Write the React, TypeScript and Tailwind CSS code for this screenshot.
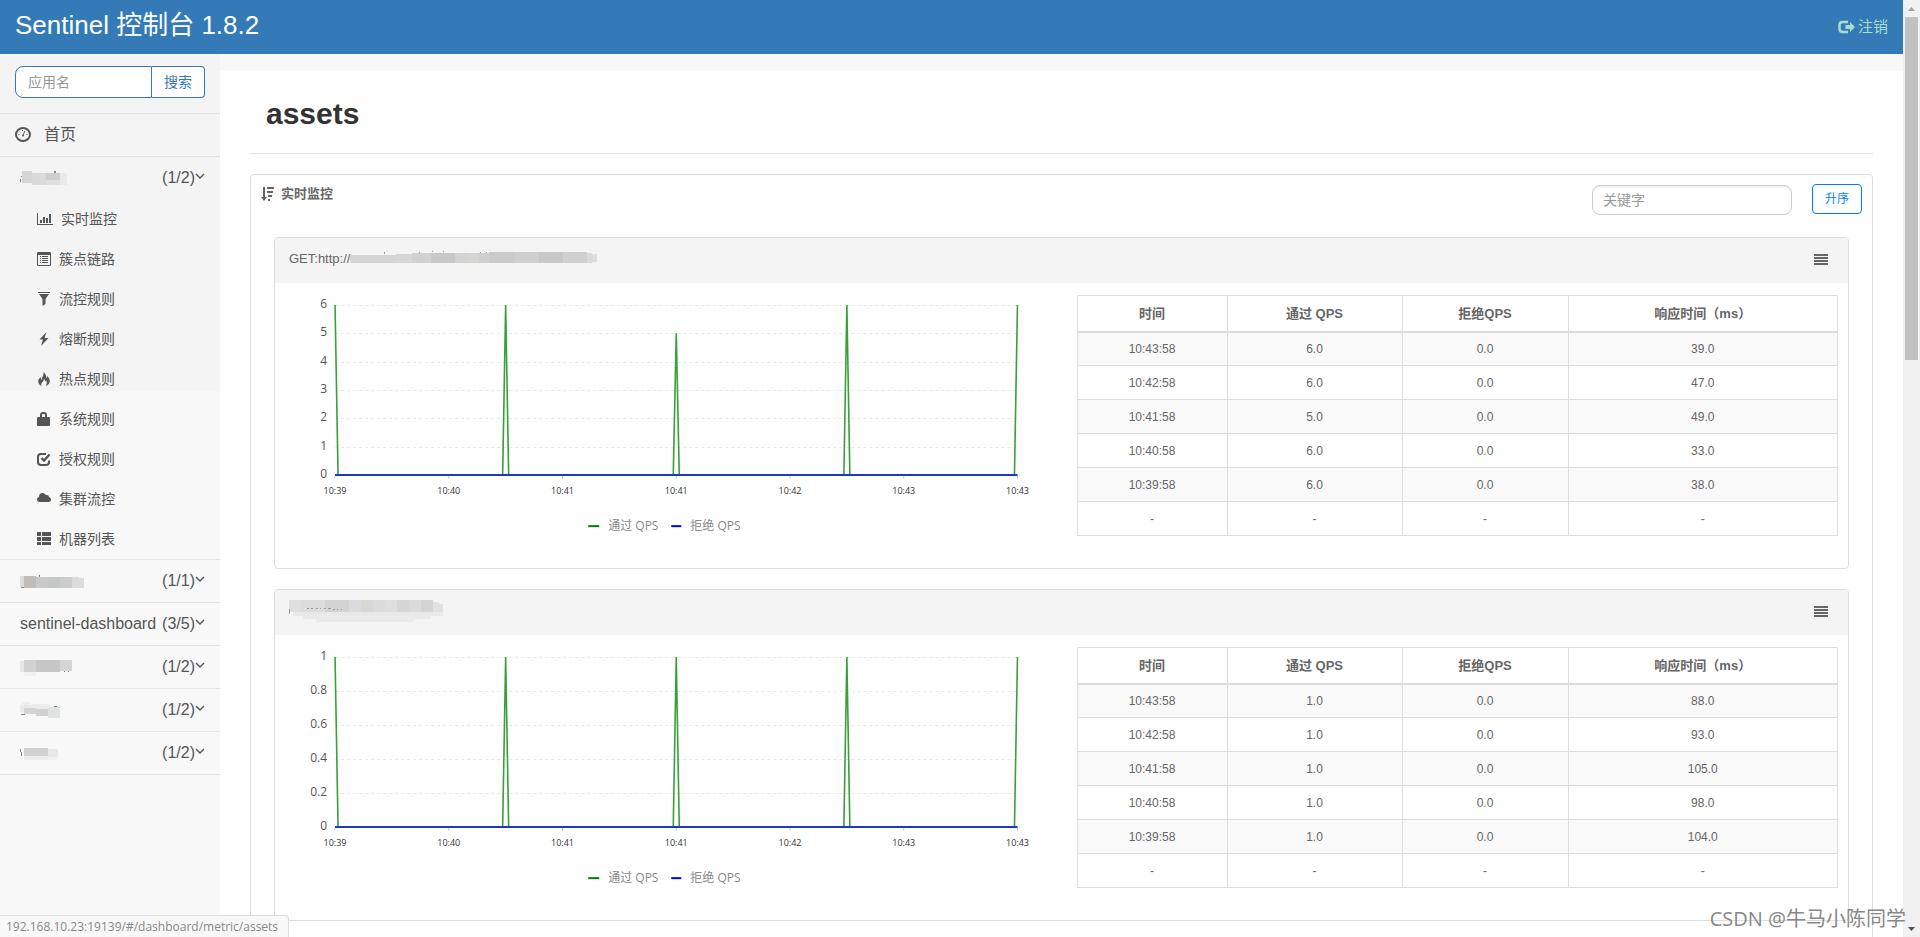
import type { ReactNode } from "react";

type Block = [x: number, y: number, w: number, h: number, fill: string];

type MenuItem = {
  label: string;
  icon: ReactNode;
};

type AppEntry = {
  id: string;
  name?: string;
  count: string;
  blocks?: Block[];
};

type MetricRow = [time: string, pass: string, block: string, rt: string];

type Metric = {
  id: string;
  prefix?: string;
  blocks: Block[];
  blocksWidth: number;
  yLabels: string[];
  peaks: number[];
  rows: MetricRow[];
};

const menuItems: MenuItem[] = [
  {
    label: "实时监控",
    icon: (
      <svg viewBox="0 0 16 14" className="h-[14px] w-4 fill-current">
        <path d="M0 1h1v11h15v1H0zM3 8h2v3H3zM6 5h2v6H6zM9 6h2v5H9zM12 2h2v9h-2z" />
      </svg>
    ),
  },
  {
    label: "簇点链路",
    icon: (
      <svg viewBox="0 0 14 14" className="size-[14px] fill-current">
        <path fillRule="evenodd" d="M1 0h12q1 0 1 1v12q0 1-1 1H1q-1 0-1-1V1q0-1 1-1zM1 3v10h12V3z" />
        <path d="M3 4h1v1H3zM5 4h6v1H5zM3 6h1v1H3zM5 6h6v1H5zM3 8h1v1H3zM5 8h6v1H5zM3 10h1v1H3zM5 10h6v1H5z" />
      </svg>
    ),
  },
  {
    label: "流控规则",
    icon: (
      <svg viewBox="0 0 14 14" className="size-[14px] fill-current">
        <path d="M1 0h12v1H1zM2 2h10L8.500 7v5L5.500 14V7z" />
      </svg>
    ),
  },
  {
    label: "熔断规则",
    icon: (
      <svg viewBox="0 0 14 14" className="size-[14px] fill-current">
        <path d="M9.500 0L2.500 7.500h3.500L4 14l7.500-8H7.500z" />
      </svg>
    ),
  },
  {
    label: "热点规则",
    icon: (
      <svg viewBox="0 0 14 14" className="size-[14px] fill-current">
        <path d="M6.500 0c.4 2-.2 3.300-1 4.700C5 5.600 4.600 6.500 5 8c-.9-.5-1.400-1.500-1.300-3C2 6.500 1 8 1.300 10c.2 1.800 1.300 3.200 3.200 4-.6-1.500-.3-2.700 1-4 .9-.9 1.500-2 1.300-3.500 1 .8 1.400 2 1.200 3.300.7-.4 1-.9 1.200-1.500.9 1.900.9 3.900-.5 5.700 2.500-.8 4.100-2.600 4.100-5 0-2.200-1.200-3.700-2.700-5.300.1 1.200-.1 2-.7 2.700C9.200 4 8.600 1.500 6.500 0z" />
      </svg>
    ),
  },
  {
    label: "系统规则",
    icon: (
      <svg viewBox="0 0 14 14" className="size-[14px] fill-current">
        <path fillRule="evenodd" d="M3 5V3q0-3 3-3h1q3 0 3 3v2h2q1 0 1 1v7q0 1-1 1H1q-1 0-1-1V6q0-1 1-1zM5 5h3V3q0-1-1-1H6Q5 2 5 3z" />
      </svg>
    ),
  },
  {
    label: "授权规则",
    icon: (
      <svg viewBox="0 0 14 14" className="size-[14px]" fill="none" stroke="currentColor" strokeWidth="2">
        <path d="M9 2H4Q1 2 1 5v5q0 3 3 3h5q3 0 3-3V8.500" />
        <path d="M4.500 6L7 8.500 12.500 2.500" strokeWidth="2.400" />
      </svg>
    ),
  },
  {
    label: "集群流控",
    icon: (
      <svg viewBox="0 0 14 14" className="size-[14px] fill-current">
        <path d="M3 10Q0 10 0 7.500 0 5.300 2 5 2 1 5.500 1q2.300 0 3.300 2Q12 2.600 12 5q2 .5 2 2.500Q14 10 11.500 10z" />
      </svg>
    ),
  },
  {
    label: "机器列表",
    icon: (
      <svg viewBox="0 0 14 14" className="size-[14px] fill-current">
        <path d="M0 0h4v4H0zM5 0h9v4H5zM0 5h4v4H0zM5 5h9v4H5zM0 10h4v3H0zM5 10h9v3H5z" />
      </svg>
    ),
  },
];

const currentApp: AppEntry = {
  id: "current",
  count: "(1/2)",
  blocks: [
    [0, 10, 1, 3, "#888"],
    [1, 7, 1, 1, "#888"],
    [2, 2, 10, 12, "#d3d5d6"],
    [12, 4, 14, 12, "#dadada"],
    [26, 4, 14, 7, "#d0cfcd"],
    [26, 11, 14, 5, "#dedede"],
    [34, 2, 2, 2, "#888"],
    [40, 4, 7, 12, "#e9e9e9"],
  ],
};

const otherApps: AppEntry[] = [
  {
    id: "g",
    count: "(1/1)",
    blocks: [
      [0, 4, 4, 11, "#dcdcdc"],
      [1, 15, 5, 1, "#888"],
      [4, 4, 12, 12, "#bfbcba"],
      [16, 5, 12, 11, "#c9cac9"],
      [28, 5, 12, 11, "#c6c8c7"],
      [19, 3, 1, 2, "#777"],
      [40, 5, 12, 11, "#cbccce"],
      [52, 5, 7, 11, "#dcdcdc"],
      [59, 6, 5, 10, "#dcdcdc"],
    ],
  },
  { id: "dashboard", name: "sentinel-dashboard", count: "(3/5)" },
  {
    id: "s",
    count: "(1/2)",
    blocks: [
      [0, 3, 4, 11, "#e6e6e6"],
      [4, 2, 12, 12, "#d0d1d3"],
      [16, 2, 24, 12, "#c6c6c6"],
      [40, 2, 12, 11, "#d5d5d5"],
      [4, 14, 12, 4, "#f1f1f1"],
      [44, 13, 1, 1, "#777"],
      [48, 13, 1, 1, "#777"],
    ],
  },
  {
    id: "c",
    count: "(1/2)",
    blocks: [
      [2, 1, 8, 3, "#eeeeee"],
      [0, 4, 12, 7, "#ebebeb"],
      [12, 3, 18, 5, "#ececec"],
      [4, 7, 12, 6, "#d4d4d4"],
      [16, 8, 12, 7, "#d2d2d2"],
      [1, 13, 4, 1, "#888"],
      [34, 5, 3, 1, "#777"],
      [28, 6, 12, 11, "#dfe2e1"],
    ],
  },
  {
    id: "v",
    count: "(1/2)",
    blocks: [
      [0, 5, 1, 3, "#888"],
      [1, 8, 1, 4, "#888"],
      [4, 4, 24, 8, "#d1d1d1"],
      [4, 12, 24, 4, "#ebebeb"],
      [28, 5, 10, 8, "#e7e8ea"],
      [28, 13, 10, 3, "#f1f1f1"],
    ],
  },
];

const metrics: Metric[] = [
  {
    id: "get",
    prefix: "GET:http://",
    blocksWidth: 250,
    blocks: [
      [0, 8, 46, 8, "#d4d4d4"],
      [34, 5, 1, 2, "#999"],
      [46, 7, 16, 9, "#d6d6d7"],
      [62, 6, 19, 10, "#d0d1d1"],
      [69, 5, 1, 1, "#999"],
      [82, 4, 1, 1, "#999"],
      [93, 4, 1, 1, "#999"],
      [81, 6, 24, 10, "#c9c9ca"],
      [105, 6, 12, 10, "#d2d3d4"],
      [117, 6, 12, 10, "#d7d5d1"],
      [129, 6, 10, 10, "#cfcfd0"],
      [130, 5, 1, 1, "#999"],
      [136, 5, 1, 1, "#999"],
      [139, 5, 26, 11, "#cbcbcc"],
      [165, 5, 24, 11, "#d0cfcf"],
      [189, 5, 24, 11, "#c8c8c9"],
      [213, 5, 24, 11, "#d0d0d0"],
      [237, 6, 5, 10, "#d8d9da"],
      [242, 7, 5, 8, "#dcdcdc"],
    ],
    yLabels: ["6", "5", "4", "3", "2", "1", "0"],
    peaks: [1, 1, 5 / 6, 1, 1],
    rows: [
      ["10:43:58", "6.0", "0.0", "39.0"],
      ["10:42:58", "6.0", "0.0", "47.0"],
      ["10:41:58", "5.0", "0.0", "49.0"],
      ["10:40:58", "6.0", "0.0", "33.0"],
      ["10:39:58", "6.0", "0.0", "38.0"],
      ["-", "-", "-", "-"],
    ],
  },
  {
    id: "path",
    blocksWidth: 160,
    blocks: [
      [0, 1, 12, 12, "#e0dfde"],
      [12, 1, 24, 12, "#dcdcdc"],
      [36, 1, 24, 12, "#d3d3d1"],
      [60, 1, 12, 12, "#dadbde"],
      [72, 1, 12, 12, "#d8d7d5"],
      [84, 1, 12, 12, "#dbdbdb"],
      [96, 1, 12, 12, "#dcdee0"],
      [108, 1, 12, 12, "#d8d6d4"],
      [120, 1, 12, 12, "#dadbdd"],
      [132, 1, 12, 12, "#d4d4d4"],
      [144, 3, 6, 10, "#e0e1e1"],
      [150, 5, 4, 8, "#e0e1e1"],
      [4, 13, 150, 4, "#e9e9e9"],
      [14, 17, 128, 3, "#eaeaea"],
      [27, 20, 97, 3, "#eaeaea"],
      [0, 10, 1, 5, "#999"],
      [18, 9, 2, 1, "#999"],
      [22, 9, 2, 1, "#999"],
      [27, 9, 2, 1, "#999"],
      [31, 9, 1, 1, "#999"],
      [35, 9, 2, 1, "#999"],
      [39, 9, 3, 1, "#999"],
      [44, 10, 2, 1, "#999"],
      [48, 10, 1, 1, "#999"],
      [52, 10, 1, 1, "#999"],
    ],
    yLabels: ["1", "0.8", "0.6", "0.4", "0.2", "0"],
    peaks: [1, 1, 1, 1, 1],
    rows: [
      ["10:43:58", "1.0", "0.0", "88.0"],
      ["10:42:58", "1.0", "0.0", "93.0"],
      ["10:41:58", "1.0", "0.0", "105.0"],
      ["10:40:58", "1.0", "0.0", "98.0"],
      ["10:39:58", "1.0", "0.0", "104.0"],
      ["-", "-", "-", "-"],
    ],
  },
];

const timeLabels = ["10:39", "10:40", "10:41", "10:41", "10:42", "10:43", "10:43"];

function Mosaic({ blocks, width, height }: { blocks: Block[]; width: number; height: number }) {
  return (
    <svg width={width} height={height} viewBox={`0 0 ${width} ${height}`} shapeRendering="crispEdges" aria-hidden="true">
      {blocks.map(([x, y, w, h, fill], i) => (
        <rect key={i} x={x} y={y} width={w} height={h} fill={fill} />
      ))}
    </svg>
  );
}

function AppRow({ app }: { app: AppEntry }) {
  return (
    <a href="#" className="flex h-[43px] items-center border-t border-[#e4e4e4] pl-5 pr-[15px] text-base">
      {app.name ?? <Mosaic blocks={app.blocks ?? []} width={70} height={18} />}
      <span className="ml-auto">{app.count}</span>
      <svg viewBox="0 0 10 10" className="mb-1 size-[10px]" fill="none" stroke="currentColor" strokeWidth="1.400">
        <path d="M1 3l4 4 4-4" />
      </svg>
    </a>
  );
}

function Sidebar() {
  return (
    <aside className="w-[220px] shrink-0 bg-[linear-gradient(#f4f4f4_337px,#f8f8f8_337px)] text-[#555]">
      <form className="flex px-[15px] pt-3 pb-[15px]">
        <input
          type="text"
          aria-label="应用名"
          placeholder="应用名"
          className="h-8 min-w-0 flex-1 rounded-l-lg border border-[#337ab7] bg-white px-3 text-sm outline-none placeholder:text-[#999]"
        />
        <button type="button" className="h-8 w-[53px] rounded-r border border-l-0 border-[#337ab7] bg-white text-sm text-[#337ab7]">
          搜索
        </button>
      </form>
      <nav className="border-b border-[#e4e4e4]">
        <a href="#" className="flex h-[43px] items-center gap-[13px] border-t border-[#e4e4e4] px-[15px] text-base">
          <svg viewBox="0 0 16 16" className="size-4" fill="none" stroke="currentColor">
            <ellipse cx="8" cy="7.500" rx="7" ry="6.500" strokeWidth="2" />
            <path d="M9.800 4L8.200 8" strokeWidth="1" />
            <path d="M3.500 7.500h1M11.500 7.500h1M5 4.500l.8.800M7.500 3v1" strokeWidth="1" />
            <circle cx="8" cy="8.500" r="1" fill="currentColor" stroke="none" />
          </svg>
          首页
        </a>
        <AppRow app={currentApp} />
        <ul>
          {menuItems.map((item) => (
            <li key={item.label}>
              <a href="#" className="flex h-10 items-center gap-2 pl-[37px] text-sm">
                {item.icon}
                {item.label}
              </a>
            </li>
          ))}
        </ul>
        {otherApps.map((app) => (
          <AppRow key={app.id} app={app} />
        ))}
      </nav>
    </aside>
  );
}

// plot area inside the 786x285 drawing
const LEFT = 60;
const RIGHT = 742;
const TOP = 22;
const BASE = 192;

function QpsChart({ yLabels, peaks }: { yLabels: string[]; peaks: number[] }) {
  const stepY = (BASE - TOP) / (yLabels.length - 1);
  const stepX = (RIGHT - LEFT) / (timeLabels.length - 1);
  const peakGap = (RIGHT - LEFT) / (peaks.length - 1);
  const half = 3;

  const points = peaks
    .flatMap((peak, i) => {
      const x = LEFT + i * peakGap;
      const y = BASE - peak * (BASE - TOP);
      return [
        [Math.max(x - half, LEFT), i === 0 ? y : BASE],
        [x, y],
        [Math.min(x + half, RIGHT), i === peaks.length - 1 ? y : BASE],
      ];
    })
    .map((p) => p.join(","))
    .join(" ");

  return (
    <svg viewBox="0 0 786 285" className="w-full font-['Open_Sans','Noto_Sans_CJK_SC',sans-serif]">
      {yLabels.map((label, i) => {
        const y = TOP + i * stepY;
        return (
          <g key={label}>
            {i < yLabels.length - 1 && (
              <line x1={LEFT} x2={RIGHT} y1={Math.round(y) + 0.5} y2={Math.round(y) + 0.5} stroke="#e8e8e8" strokeDasharray="3 3" />
            )}
            <text x={52} y={y + 3} textAnchor="end" fontSize={12} fill="#555">
              {label}
            </text>
          </g>
        );
      })}
      {timeLabels.map((label, i) => {
        const x = LEFT + i * stepX;
        return (
          <g key={i}>
            <line x1={x} x2={x} y1={BASE} y2={BASE + 4} stroke="#ccc" />
            <text x={x} y={211} textAnchor="middle" fontSize={9} fill="#333">
              {label}
            </text>
          </g>
        );
      })}
      <polyline points={points} fill="none" stroke="#38a038" strokeWidth="1.600" strokeLinejoin="bevel" />
      <line x1={LEFT} x2={RIGHT} y1={BASE} y2={BASE} stroke="#1c39c0" strokeWidth="2" />
      <line x1={313} x2={324} y1={243} y2={243} stroke="#008000" strokeWidth="2" />
      <text x={333} y={247} fontSize={12} fill="#888">
        通过 QPS
      </text>
      <line x1={396} x2={406} y1={243} y2={243} stroke="#0000ff" strokeWidth="2" />
      <text x={415} y={247} fontSize={12} fill="#888">
        拒绝 QPS
      </text>
    </svg>
  );
}

function MetricTable({ rows }: { rows: MetricRow[] }) {
  return (
    <table className="w-full table-fixed border-collapse border border-[#ddd] text-center text-xs text-[#666]">
      <thead>
        <tr className="h-9 border-b-2 border-[#ddd] text-[13px]">
          <th className="w-[150px] border-x border-[#ddd]">时间</th>
          <th className="w-[175px] border-x border-[#ddd]">通过 QPS</th>
          <th className="w-[166px] border-x border-[#ddd]">拒绝QPS</th>
          <th className="border-x border-[#ddd]">响应时间（ms）</th>
        </tr>
      </thead>
      <tbody>
        {rows.map((row, i) => (
          <tr key={i} className="h-[34px] border-b border-[#ddd] odd:bg-[#f9f9f9]">
            {row.map((value, j) => (
              <td key={j} className="border-x border-[#ddd]">
                {value}
              </td>
            ))}
          </tr>
        ))}
      </tbody>
    </table>
  );
}

function MetricCard({ metric }: { metric: Metric }) {
  return (
    <section className="overflow-hidden rounded border border-[#ddd]">
      <header className="flex h-[45px] items-start justify-between bg-[#f4f4f4] pr-5 pl-[14px] text-[13px] text-[#666]">
        <div className="flex items-center pt-[9px]">
          {metric.prefix}
          <Mosaic blocks={metric.blocks} width={metric.blocksWidth} height={23} />
        </div>
        <button type="button" aria-label="menu" className="pt-4">
          <svg viewBox="0 0 14 12" className="h-3 w-[14px] fill-current">
            <path d="M0 0h14v2H0zM0 3h14v2H0zM0 6h14v2H0zM0 9h14v2H0z" />
          </svg>
        </button>
      </header>
      <div className="grid grid-cols-2">
        <QpsChart yLabels={metric.yLabels} peaks={metric.peaks} />
        <div className="pt-3 pr-[10px] pl-[15px]">
          <MetricTable rows={metric.rows} />
        </div>
      </div>
    </section>
  );
}

function Content() {
  return (
    <main className="min-w-0 flex-1 border-t-[17px] border-[#f8f8f8] bg-white px-[30px]">
      <h1 className="border-b border-[#e4e4e4] px-4 pt-[23px] pb-[19px] text-[30px] leading-10 font-bold text-[#333]">assets</h1>
      <section className="mt-5 rounded border border-[#ddd]">
        <div className="flex items-start pr-[10px] pl-[10px]">
          <h2 className="flex items-center gap-[6px] pt-[9px] text-[13px] font-bold text-[#666]">
            <svg viewBox="0 0 14 14" className="size-[14px] fill-current">
              <path d="M2 0h2v10h2L3 14 0 10h2zM6 0h7v2H6zM6 4h6v2H6zM7 8h4v2H7zM7 12h2v2H7z" />
            </svg>
            实时监控
          </h2>
          <input
            type="text"
            aria-label="关键字"
            placeholder="关键字"
            className="mt-[10px] ml-auto h-[30px] w-[200px] rounded-lg border border-[#ccc] px-[10px] text-sm shadow-[inset_0_1px_1px_rgba(0,0,0,0.08)] outline-none placeholder:text-[#999]"
          />
          <button type="button" className="mt-[9px] ml-5 h-[30px] w-[50px] rounded border border-[#007bff] text-xs text-[#007bff]">
            升序
          </button>
        </div>
        <div className="flex flex-col gap-5 px-[23px] pt-[22px] pb-5">
          {metrics.map((metric) => (
            <MetricCard key={metric.id} metric={metric} />
          ))}
        </div>
      </section>
    </main>
  );
}

function Scrollbar() {
  return (
    <div className="flex w-[17px] shrink-0 flex-col items-center bg-[#f1f1f1]">
      <svg viewBox="0 0 17 17" className="size-[17px]">
        <path d="M5 11h7L8.500 7z" fill="#a3a3a3" />
      </svg>
      <div className="h-[343px] w-[13px] bg-[#c1c1c1]" />
      <svg viewBox="0 0 17 17" className="mt-auto size-[17px]">
        <path d="M5 7h7L8.500 11z" fill="#505050" />
      </svg>
    </div>
  );
}

export default function App() {
  return (
    <div className="relative flex h-screen overflow-hidden bg-[#f8f8f8] font-['Liberation_Sans','Noto_Sans_CJK_SC',sans-serif]">
      <div className="flex min-w-0 flex-1 flex-col">
        <header className="flex h-[54px] shrink-0 items-center justify-between bg-[#337ab7] px-[15px]">
          <a href="#" className="pb-1 text-[26px] leading-9 text-white">
            Sentinel 控制台 1.8.2
          </a>
          <a href="#" className="flex items-center gap-[3px] text-[15px] text-[#a9ddcb]">
            <svg viewBox="0 0 17 14" className="h-[14px] w-[17px]" fill="none" stroke="currentColor" strokeWidth="2">
              <path d="M10 2H4.500Q1.500 2 1.500 5v4q0 3 3 3H10" strokeWidth="2.500" />
              <path d="M7.500 5H12V2l5 5-5 5V9H7.500z" fill="currentColor" stroke="none" />
            </svg>
            注销
          </a>
        </header>
        <div className="flex min-h-0 flex-1">
          <Sidebar />
          <Content />
        </div>
      </div>
      <Scrollbar />
      <div className="absolute bottom-0 left-0 flex h-[22px] items-center rounded-tr border-t border-r border-[#ddd] bg-[#f8f8f8] pr-[10px] pl-[6px] font-['Open_Sans',sans-serif] text-xs text-[#888]">
        192.168.10.23:19139/#/dashboard/metric/assets
      </div>
      <div className="absolute right-[14px] bottom-1 font-['Open_Sans','Noto_Sans_CJK_SC',sans-serif] text-xl text-[#888]">CSDN @牛马小陈同学</div>
    </div>
  );
}
